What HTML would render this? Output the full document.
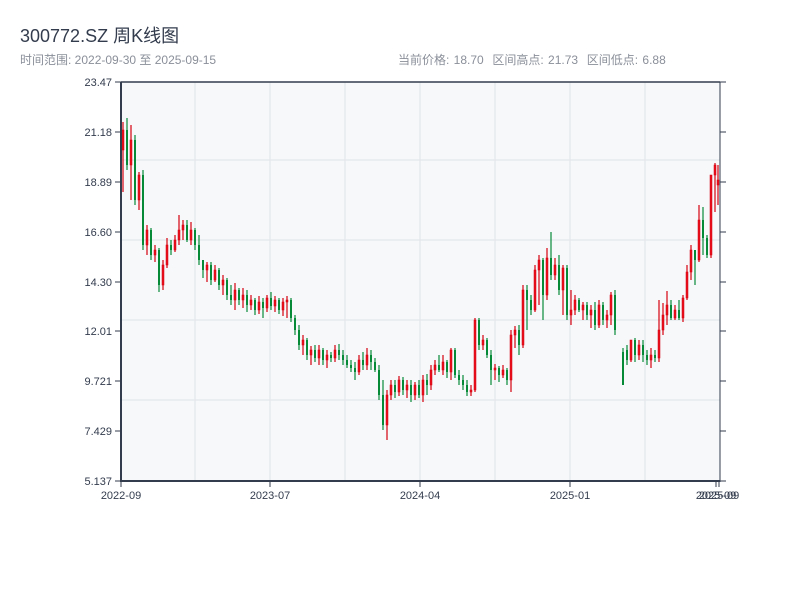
<!DOCTYPE html>
<html><head><meta charset="utf-8"><style>
body{margin:0;width:800px;height:600px;background:#fff;font-family:"Liberation Sans","Noto Sans CJK SC",sans-serif;overflow:hidden;position:relative}
.t{position:absolute;left:20px;top:22px;font-size:18px;color:#333c4d}
.s{position:absolute;left:20px;top:51px;font-size:12px;color:#8a8f99}
.r{position:absolute;left:398px;top:51px;font-size:12px;color:#8a8f99;word-spacing:1px}
svg{position:absolute;left:0;top:0}
</style></head><body>
<div class="t">300772.SZ 周K线图</div>
<div class="s">时间范围: 2022-09-30 至 2025-09-15</div>
<div class="r">当前价格: 18.70&nbsp; 区间高点: 21.73&nbsp; 区间低点: 6.88</div>
<svg width="800" height="600" xmlns="http://www.w3.org/2000/svg" font-family="Liberation Sans, sans-serif" font-size="11" fill="#333c4d">
<rect x="121" y="82" width="599" height="399" fill="#f6f8fa"/>
<g stroke="#e0e3e8">
<line x1="121" x2="720" y1="160" y2="160"/><line x1="121" x2="720" y1="240" y2="240"/><line x1="121" x2="720" y1="320" y2="320"/><line x1="121" x2="720" y1="400" y2="400"/>
<line x1="195" x2="195" y1="82" y2="481"/><line x1="270" x2="270" y1="82" y2="481"/><line x1="345" x2="345" y1="82" y2="481"/><line x1="420" x2="420" y1="82" y2="481"/><line x1="495" x2="495" y1="82" y2="481"/><line x1="570" x2="570" y1="82" y2="481"/><line x1="645" x2="645" y1="82" y2="481"/>
</g>
<g id="k"></g>
<g stroke="#333c4d">
<line x1="115" x2="121" y1="82" y2="82"/><line x1="115" x2="121" y1="132" y2="132"/><line x1="115" x2="121" y1="182" y2="182"/><line x1="115" x2="121" y1="232" y2="232"/><line x1="115" x2="121" y1="282" y2="282"/><line x1="115" x2="121" y1="331" y2="331"/><line x1="115" x2="121" y1="381" y2="381"/><line x1="115" x2="121" y1="431" y2="431"/><line x1="115" x2="121" y1="481" y2="481"/>
<line x1="720" x2="726" y1="82" y2="82"/><line x1="720" x2="726" y1="132" y2="132"/><line x1="720" x2="726" y1="182" y2="182"/><line x1="720" x2="726" y1="232" y2="232"/><line x1="720" x2="726" y1="282" y2="282"/><line x1="720" x2="726" y1="331" y2="331"/><line x1="720" x2="726" y1="381" y2="381"/><line x1="720" x2="726" y1="431" y2="431"/><line x1="720" x2="726" y1="481" y2="481"/>
<line x1="121" x2="720" y1="82" y2="82" stroke-width="1.5"/>
<line x1="121" x2="121" y1="82" y2="482" stroke-width="2"/>
<line x1="720" x2="720" y1="82" y2="482"/>
<line x1="121" x2="720" y1="481" y2="481" stroke-width="2"/>
<line x1="121" x2="121" y1="481" y2="487"/><line x1="270" x2="270" y1="481" y2="487"/><line x1="420" x2="420" y1="481" y2="487"/><line x1="570" x2="570" y1="481" y2="487"/><line x1="716" x2="716" y1="481" y2="487"/><line x1="719" x2="719" y1="481" y2="487"/>
</g>
<g text-anchor="end">
<text x="112" y="86">23.47</text><text x="112" y="136">21.18</text><text x="112" y="186">18.89</text><text x="112" y="236">16.60</text><text x="112" y="286">14.30</text><text x="112" y="335">12.01</text><text x="112" y="385">9.721</text><text x="112" y="435">7.429</text><text x="112" y="485">5.137</text>
</g>
<g text-anchor="middle">
<text x="121" y="499">2022-09</text><text x="270" y="499">2023-07</text><text x="420" y="499">2024-04</text><text x="570" y="499">2025-01</text><text x="716" y="499">2025-09</text><text x="719" y="499">2025-09</text>
</g>
</svg>
<script>
try{
var d=[[123,150,130,122,192],[127,130,165,118,170],[131,165,140,125,200],[135,140,200,135,205],[139,200,175,172,210],[143,175,245,170,250],[147,245,230,225,255],[151,230,255,228,260],[155,255,250,245,262],[159,250,285,248,292],[163,285,265,260,290],[167,265,245,238,268],[171,245,250,240,255],[175,250,240,235,252],[179,240,230,215,245],[183,230,225,220,240],[187,225,240,220,242],[191,240,230,222,245],[195,230,245,228,250],[199,245,260,235,265],[203,260,270,262,278],[207,270,265,262,282],[211,265,280,262,285],[215,280,270,265,282],[219,270,285,268,290],[223,285,280,275,295],[227,280,295,278,300],[231,295,300,285,305],[235,300,290,283,310],[239,290,300,288,305],[243,300,295,288,308],[247,295,305,290,312],[251,305,300,295,310],[255,300,310,298,315],[259,310,302,296,314],[263,302,308,298,318],[267,308,298,295,312],[271,298,306,292,310],[275,306,300,296,312],[279,300,310,298,314],[283,310,302,298,316],[287,302,300,296,318],[291,300,318,298,322],[295,318,330,315,335],[299,330,345,325,350],[303,345,340,335,355],[307,340,355,338,360],[311,355,350,346,365],[315,350,358,345,362],[319,358,350,345,365],[323,350,360,348,365],[327,360,355,350,368],[331,355,358,352,362],[335,358,350,345,362],[339,350,355,344,360],[343,355,360,350,365],[347,360,365,355,368],[351,365,368,360,372],[355,368,372,362,380],[359,372,360,355,375],[363,360,365,352,370],[367,365,355,348,370],[371,355,362,350,370],[375,362,370,358,372],[379,370,395,365,400],[383,395,425,380,430],[387,425,395,390,440],[391,395,385,380,400],[395,385,392,380,398],[399,392,380,376,396],[403,380,390,377,395],[407,390,385,380,398],[411,385,395,380,402],[415,395,385,382,400],[419,385,395,380,398],[423,395,380,375,402],[427,380,385,374,395],[431,385,370,365,390],[435,370,365,360,375],[439,365,370,355,372],[443,370,362,355,375],[447,362,372,360,378],[451,372,350,348,380],[455,350,375,348,378],[459,375,380,370,385],[463,380,385,375,390],[467,385,392,380,396],[471,392,390,385,396],[475,390,320,318,392],[479,320,345,318,350],[483,345,340,335,350],[487,340,355,338,358],[491,355,370,350,385],[495,370,368,364,380],[499,368,375,366,382],[503,375,370,365,378],[507,370,380,368,385],[511,380,335,330,392],[515,335,330,326,348],[519,330,345,325,355],[523,345,290,285,348],[527,290,300,285,330],[531,300,310,295,315],[535,310,270,265,312],[539,270,260,255,305],[543,260,295,258,320],[547,295,258,248,300],[551,258,275,232,280],[555,275,265,258,280],[559,265,290,255,295],[563,290,268,265,315],[567,268,315,265,320],[571,315,310,290,325],[575,310,300,295,315],[579,300,310,298,312],[583,310,305,302,320],[587,305,315,302,320],[591,315,310,305,328],[595,310,325,302,330],[599,325,305,300,328],[603,305,320,302,325],[607,320,315,310,328],[611,315,295,292,325],[615,295,330,290,335],[623,352,385,348,385],[627,350,360,345,365],[631,360,340,340,362],[635,340,355,338,362],[639,355,345,340,360],[643,345,355,340,362],[647,355,360,350,365],[651,360,355,348,368],[655,355,358,350,362],[659,358,330,300,362],[663,330,315,303,335],[667,315,305,291,325],[671,305,318,300,320],[675,318,310,305,320],[679,310,318,300,320],[683,318,298,295,322],[687,298,272,265,300],[691,272,250,245,280],[695,250,260,250,285],[699,260,220,205,262],[703,220,238,207,255],[707,238,255,235,258],[711,255,175,175,258],[715,175,165,163,212],[718,185,180,165,205]];
var NS="http://www.w3.org/2000/svg",k=document.getElementById('k');
for(var i=0;i<d.length;i++){var c=d[i],up=c[2]<c[1],col=up?'#d7000f':'#078a38';
var l=document.createElementNS(NS,'line');l.setAttribute('x1',c[0]);l.setAttribute('x2',c[0]);l.setAttribute('y1',c[3]);l.setAttribute('y2',c[4]);l.setAttribute('stroke',col);l.setAttribute('stroke-width','1.2');k.appendChild(l);
var t=Math.min(c[1],c[2]),b=Math.max(c[1],c[2]);var r=document.createElementNS(NS,'rect');r.setAttribute('x',c[0]-1);r.setAttribute('y',t);r.setAttribute('width',2);r.setAttribute('height',Math.max(1,b-t));r.setAttribute('fill',up?'#e8101c':col);if(up){r.setAttribute('stroke',col);r.setAttribute('stroke-width','0.5');}k.appendChild(r);}
}catch(e){}
</script>
</body></html>
